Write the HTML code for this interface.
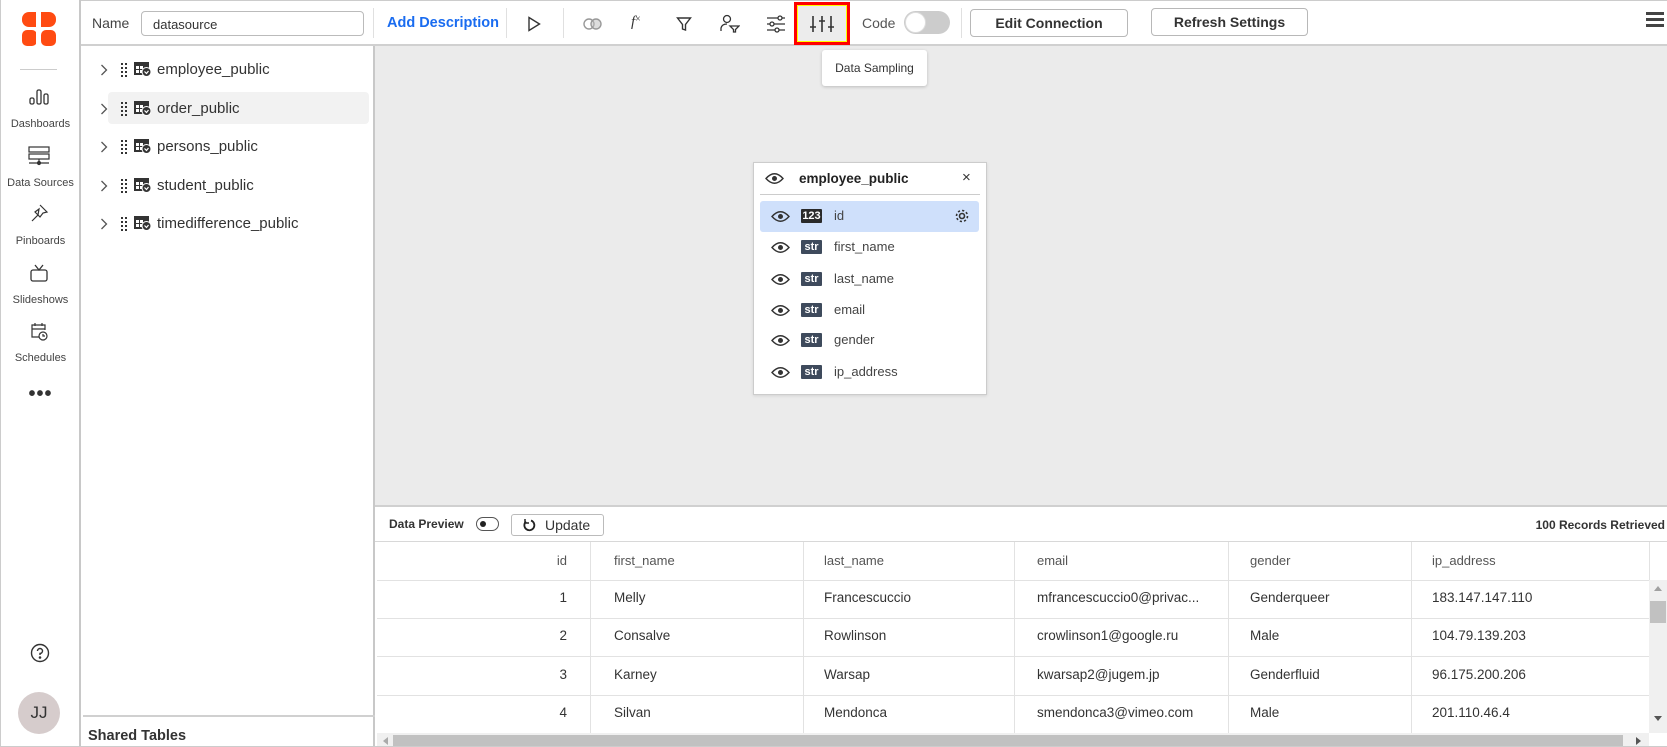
<!DOCTYPE html>
<html><head><meta charset="utf-8"><style>
*{box-sizing:border-box;margin:0;padding:0}
body{width:1667px;height:747px;overflow:hidden;font-family:"Liberation Sans",sans-serif;background:#fff;position:relative;color:#333}
.a{position:absolute}
.nav{left:0;top:0;width:81px;height:747px;background:#fff;border-right:2px solid #c8c8c8;border-left:1px solid #ccc}
.navlbl{font-size:11px;color:#444;width:81px;text-align:center;left:0}
.top{left:81px;top:0;width:1586px;height:46px;border-bottom:2px solid #d0d0d0;border-top:1px solid #ccc;background:#fff}
.lp{left:83px;top:46px;width:292px;height:701px;border-right:2px solid #c8c8c8;background:#fff}
.canvas{left:375px;top:46px;width:1292px;height:461px;background:#ebebeb;border-bottom:2px solid #d0d0d0}
.tree{font-size:15px;color:#333;white-space:nowrap}
.btn{border:1px solid #b8b8b8;border-radius:4px;font-size:14px;font-weight:bold;color:#333;text-align:center;background:#fff}
.th{font-size:13px;color:#555}
.td{font-size:13.5px;color:#333;white-space:nowrap}
.vl{width:1px;background:#e2e2e2}
.hl{height:1px;background:#e2e2e2;left:377px;width:1272px}
.badge{width:21px;height:14px;background:#3e4a5c;color:#fff;font-size:11px;font-weight:bold;text-align:center;line-height:14px;border-radius:1px}
.fld{font-size:13px;color:#444}
</style></head><body>

<!-- NAV -->
<div class="a nav"></div>
<svg class="a" style="left:22px;top:12px" width="34" height="34" viewBox="0 0 34 34"><rect x="0" y="0" width="34" height="15" rx="7" fill="#ff4b12"/><rect x="0" y="18" width="15" height="16" rx="5" fill="#ff4b12"/><rect x="19" y="18" width="15" height="16" rx="5" fill="#ff4b12"/><rect x="14" y="0" width="5" height="34" fill="#fff"/><rect x="0" y="15" width="34" height="3" fill="#fff"/></svg>
<div class="a" style="left:20px;top:69px;width:37px;height:1px;background:#ccc"></div>
<svg class="a" style="left:29px;top:89px" width="20" height="16" fill="none" stroke="#333" stroke-width="1.3"><rect x="1" y="9" width="4" height="6" rx="1.5"/><rect x="8" y="1" width="4" height="14" rx="1.5"/><rect x="15" y="5" width="4" height="10" rx="1.5"/></svg>
<div class="a navlbl" style="top:118px">Dashboards</div>
<svg class="a" style="left:28px;top:146px" width="22" height="20" fill="none" stroke="#333" stroke-width="1.2"><rect x="1" y="1" width="20" height="5"/><rect x="1" y="8" width="20" height="5"/><line x1="11" y1="13" x2="11" y2="17"/><line x1="1" y1="17" x2="21" y2="17"/><circle cx="11" cy="17" r="1.5" fill="#333"/></svg>
<div class="a navlbl" style="top:177px">Data Sources</div>
<svg class="a" style="left:29px;top:203px" width="20" height="20" fill="none" stroke="#333" stroke-width="1.2"><path d="M11 2 L18 9 L14 10 L11 14 L9 12 L3 18 M9 12 L6 9 L10 6 Z"/></svg>
<div class="a navlbl" style="top:235px">Pinboards</div>
<svg class="a" style="left:29px;top:264px" width="20" height="18" fill="none" stroke="#333" stroke-width="1.3"><rect x="2" y="6" width="16" height="11" rx="2"/><path d="M6 1 L10 6 L14 1"/></svg>
<div class="a navlbl" style="top:294px">Slideshows</div>
<svg class="a" style="left:29px;top:321px" width="20" height="20" fill="none" stroke="#333" stroke-width="1.2"><path d="M10 16 H3 V4 H16 V9 M3 8 H16 M6 2 V5 M13 2 V5"/><circle cx="14" cy="15" r="4"/><path d="M14 13 V15 H16"/></svg>
<div class="a navlbl" style="top:352px">Schedules</div>
<div class="a" style="left:0;width:81px;top:383px;text-align:center;font-size:20px;font-weight:bold;color:#333;letter-spacing:1px">•••</div>
<svg class="a" style="left:30px;top:643px" width="20" height="20" fill="none" stroke="#333" stroke-width="1.4"><circle cx="10" cy="10" r="8.5"/><path d="M7.5 8 A2.5 2.5 0 1 1 10 10.5 V12"/><circle cx="10" cy="14.5" r="0.6" fill="#333"/></svg>
<div class="a" style="left:18px;top:692px;width:42px;height:42px;border-radius:50%;background:#d6cccc;text-align:center;line-height:42px;font-size:17px;color:#333">JJ</div>

<!-- TOP BAR -->
<div class="a top"></div>
<div class="a" style="left:92px;top:15px;font-size:14px;color:#444">Name</div>
<div class="a" style="left:141px;top:11px;width:223px;height:25px;border:1px solid #bbb;border-radius:4px;font-size:13px;padding:5px 0 0 11px;color:#333">datasource</div>
<div class="a" style="left:373px;top:8px;width:1px;height:30px;background:#e0e0e0"></div>
<div class="a" style="left:387px;top:15px;font-size:14.5px;font-weight:bold;color:#1a6cf0">Add Description</div>
<div class="a" style="left:506px;top:8px;width:1px;height:30px;background:#e0e0e0"></div>
<svg class="a" style="left:527px;top:16px" width="14" height="16" fill="none" stroke="#333" stroke-width="1.4"><path d="M2 1.5 L12.5 8 L2 14.5 Z"/></svg>
<div class="a" style="left:563px;top:8px;width:1px;height:30px;background:#e0e0e0"></div>
<svg class="a" style="left:583px;top:18px" width="20" height="12" fill="none" stroke="#999" stroke-width="1.4"><circle cx="6" cy="6" r="5"/><circle cx="13" cy="6" r="5" fill="#bbb" fill-opacity=".5"/></svg>
<div class="a" style="left:631px;top:14px;font-size:15px;font-style:italic;color:#333;font-family:'Liberation Serif',serif">f<span style="font-size:10px;font-style:normal;vertical-align:top">×</span></div>
<svg class="a" style="left:676px;top:16px" width="16" height="16" fill="none" stroke="#333" stroke-width="1.4"><path d="M1.5 2 H14.5 L9.5 8.5 V14 L6.5 13 V8.5 Z"/></svg>
<svg class="a" style="left:720px;top:14px" width="20" height="19" fill="none" stroke="#333" stroke-width="1.3"><circle cx="7" cy="5" r="3.5"/><path d="M1 17 V14 Q2 10 7 10"/><path d="M10 12 H19 L15.5 15.5 V18 H13.5 V15.5 Z"/></svg>
<svg class="a" style="left:766px;top:15px" width="20" height="18" fill="none" stroke="#333" stroke-width="1.3"><path d="M1 3 H19 M1 9 H19 M1 15 H19"/><circle cx="14" cy="3" r="2" fill="#fff"/><circle cx="6" cy="9" r="2" fill="#fff"/><circle cx="11" cy="15" r="2" fill="#fff"/></svg>
<div class="a" style="left:794px;top:2px;width:56px;height:43px;border:3px solid #f00;outline:1px solid #ff0;outline-offset:-4px;background:#ececec"></div>
<svg class="a" style="left:810px;top:15px" width="24" height="18" fill="none" stroke="#333" stroke-width="1.6"><path d="M3 1 V17 M12 1 V17 M21 1 V17 M0 12 H6 M9 6 H15 M18 12 H24"/></svg>
<div class="a" style="left:862px;top:15px;font-size:14px;color:#555">Code</div>
<div class="a" style="left:904px;top:11px;width:46px;height:23px;border-radius:12px;background:#ccc"></div>
<div class="a" style="left:905px;top:12px;width:21px;height:21px;border-radius:50%;background:#fff;border:1px solid #ddd"></div>
<div class="a" style="left:961px;top:8px;width:1px;height:30px;background:#e0e0e0"></div>
<div class="a btn" style="left:970px;top:9px;width:158px;height:28px;line-height:26px">Edit Connection</div>
<div class="a btn" style="left:1151px;top:8px;width:157px;height:28px;line-height:26px">Refresh Settings</div>
<div class="a" style="left:1646px;top:12px;width:18px;height:3px;background:#444;box-shadow:0 6px 0 #444,0 12px 0 #444"></div>

<!-- LEFT PANEL -->
<div class="a lp"></div>
<div class="a" style="left:108px;top:92px;width:261px;height:32px;background:#f2f2f2;border-radius:4px"></div>
<div id="tree"></div>
<div class="a" style="left:83px;top:715px;width:292px;height:2px;background:#d0d0d0"></div>
<div class="a" style="left:88px;top:728px;font-size:14.5px;font-weight:bold;color:#333">Shared Tables</div>

<!-- CANVAS -->
<div class="a canvas"></div>
<div class="a" style="left:822px;top:50px;width:105px;height:36px;background:#fff;border-radius:3px;box-shadow:0 1px 3px rgba(0,0,0,.2);font-size:12px;color:#333;line-height:36px;text-align:center">Data Sampling</div>

<div class="a" style="left:753px;top:162px;width:234px;height:233px;background:#fff;border:1px solid #ccc;box-shadow:0 1px 3px rgba(0,0,0,.1)"></div>
<svg class="a" style="left:765px;top:172px" width="19" height="13" fill="none" stroke="#333" stroke-width="1.4"><path d="M1 6.5 Q9.5 -3 18 6.5 Q9.5 16 1 6.5 Z"/><circle cx="9.5" cy="6.5" r="1.8" fill="#333"/></svg>
<div class="a" style="left:799px;top:171px;font-size:13.5px;font-weight:bold;color:#222">employee_public</div>
<div class="a" style="left:962px;top:169px;font-size:15px;color:#333">×</div>
<div class="a" style="left:760px;top:194px;width:220px;height:1px;background:#ccc"></div>
<div class="a" style="left:760px;top:201px;width:219px;height:31px;background:#cfe0fb;border-radius:3px"></div>
<div id="flds"></div>
<svg class="a" style="left:954px;top:208px" width="16" height="16" fill="none" stroke="#333" stroke-width="1.6"><circle cx="8" cy="8" r="2.5"/><circle cx="8" cy="8" r="5.5" stroke-dasharray="2.2 2.1"/></svg>

<!-- DATA PREVIEW -->
<div class="a" style="left:389px;top:517px;font-size:12px;font-weight:bold;color:#333">Data Preview</div>
<div class="a" style="left:476px;top:517px;width:23px;height:14px;border:1px solid #555;border-radius:7px"></div>
<div class="a" style="left:480px;top:521px;width:6px;height:6px;border-radius:50%;background:#222"></div>
<div class="a" style="left:511px;top:514px;width:93px;height:22px;border:1px solid #bbb;border-radius:3px;font-size:14px;color:#333;line-height:20px;padding-left:33px">Update</div>
<svg class="a" style="left:522px;top:518px" width="14" height="14" fill="none" stroke="#222" stroke-width="1.8"><path d="M4 3.5 A5 5 0 1 0 9 2.5"/><path d="M3 1 V5 H7" stroke-width="1.5"/></svg>
<div class="a" style="left:1464px;width:201px;text-align:right;white-space:nowrap;top:518px;font-size:12px;font-weight:bold;color:#333">100 Records Retrieved</div>

<div class="a" style="left:375px;top:541px;width:1292px;height:1px;background:#d8d8d8"></div>
<div id="tbl"></div>
<!-- scrollbars -->
<div class="a" style="left:1649px;top:580px;width:18px;height:153px;background:#f0f0f0"></div>
<div class="a" style="left:1650px;top:601px;width:16px;height:22px;background:#c1c1c1"></div>
<div class="a" style="left:1654px;top:586px;width:0;height:0;border:4px solid transparent;border-bottom:5px solid #a0a0a0;border-top:0"></div>
<div class="a" style="left:1654px;top:716px;width:0;height:0;border:4px solid transparent;border-top:5px solid #555;border-bottom:0"></div>
<div class="a" style="left:377px;top:733px;width:1272px;height:14px;background:#f0f0f0"></div>
<div class="a" style="left:393px;top:735px;width:1230px;height:12px;background:#c1c1c1"></div>
<div class="a" style="left:383px;top:737px;width:0;height:0;border:4px solid transparent;border-right:5px solid #aaa;border-left:0"></div>
<div class="a" style="left:1636px;top:737px;width:0;height:0;border:4px solid transparent;border-left:5px solid #555;border-right:0"></div>
<div class="a" style="left:0;top:746px;width:1667px;height:1px;background:#ccc"></div>

<script>
var t='',ys=[70,109,147,186,224],nm=['employee_public','order_public','persons_public','student_public','timedifference_public'];
for(var i=0;i<5;i++){var y=ys[i];
t+='<svg class="a" style="left:100px;top:'+(y-6)+'px" width="8" height="12" fill="none" stroke="#555" stroke-width="1.3"><path d="M1.5 1 L6.5 6 L1.5 11"/></svg>';
t+='<svg class="a" style="left:121px;top:'+(y-7)+'px" width="6" height="14" fill="#333">'+[0,4,8,12].map(function(k){return '<rect x="0" y="'+k+'" width="2" height="2"/><rect x="4" y="'+k+'" width="2" height="2"/>'}).join('')+'</svg>';
t+='<svg class="a" style="left:134px;top:'+(y-8)+'px" width="17" height="15"><rect x="0" y="0" width="15" height="13" fill="#333"/><rect x="2" y="4" width="3" height="3" fill="#fff"/><rect x="6" y="4" width="3" height="3" fill="#fff"/><rect x="2" y="8" width="3" height="3" fill="#fff"/><rect x="6" y="8" width="3" height="3" fill="#fff"/><circle cx="12.5" cy="10" r="4.5" fill="#333" stroke="#fff" stroke-width="1"/><path d="M10.5 9.5 L12.5 11.5 L14.5 9" stroke="#fff" stroke-width="1.2" fill="none"/></svg>';
t+='<div class="a tree" style="left:157px;top:'+(y-9)+'px">'+nm[i]+'</div>';}
document.getElementById('tree').outerHTML=t;
var f='',fy=[216,247,279,310,340,372],fn=['id','first_name','last_name','email','gender','ip_address'];
for(i=0;i<6;i++){y=fy[i];
f+='<svg class="a" style="left:771px;top:'+(y-6)+'px" width="19" height="13" fill="none" stroke="#333" stroke-width="1.4"><path d="M1 6.5 Q9.5 -3 18 6.5 Q9.5 16 1 6.5 Z"/><circle cx="9.5" cy="6.5" r="1.8" fill="#333"/></svg>';
f+='<div class="a badge" style="left:801px;top:'+(y-7)+'px;'+(i==0?'background:#2a2a2a':'')+'">'+(i==0?'123':'str')+'</div>';
f+='<div class="a fld" style="left:834px;top:'+(y-8)+'px">'+fn[i]+'</div>';}
document.getElementById('flds').outerHTML=f;
var h='',cols=[614,824,1037,1250,1432],hd=['first_name','last_name','email','gender','ip_address'];
var rows=[['1','Melly','Francescuccio','mfrancescuccio0@privac...','Genderqueer','183.147.147.110'],['2','Consalve','Rowlinson','crowlinson1@google.ru','Male','104.79.139.203'],['3','Karney','Warsap','kwarsap2@jugem.jp','Genderfluid','96.175.200.206'],['4','Silvan','Mendonca','smendonca3@vimeo.com','Male','201.110.46.4']];
[590,803,1014,1228,1411,1649].forEach(function(x){h+='<div class="a vl" style="left:'+x+'px;top:542px;height:191px"></div>'});
[580,618,656,695].forEach(function(y){h+='<div class="a hl" style="top:'+y+'px"></div>'});
h+='<div class="a th" style="left:540px;width:27px;text-align:right;top:553px">id</div>';
for(i=0;i<5;i++)h+='<div class="a th" style="left:'+cols[i]+'px;top:553px">'+hd[i]+'</div>';
var ry=[598,636,675,713];
for(var r=0;r<4;r++){h+='<div class="a td" style="left:540px;width:27px;text-align:right;top:'+(ry[r]-8)+'px">'+rows[r][0]+'</div>';
for(i=0;i<5;i++)h+='<div class="a td" style="left:'+cols[i]+'px;top:'+(ry[r]-8)+'px">'+rows[r][i+1]+'</div>';}
document.getElementById('tbl').outerHTML=h;
</script>
</body></html>
